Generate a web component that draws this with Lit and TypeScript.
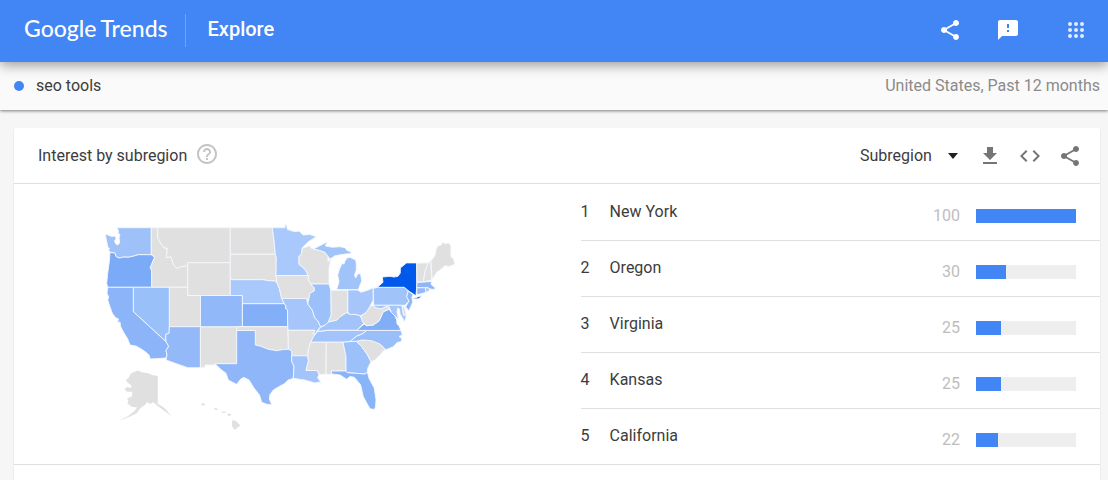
import { LitElement, html, css, svg } from "lit";
import { customElement, property } from "lit/decorators.js";

const NONE = "#e0e0e0";

interface Region {
  name: string;
  fill: string;
  d: string;
}

const REGIONS: Region[] = [
  { name: "Washington", fill: "#9fc1fa", d: "M117 227.7H151.3V254.7H138.3L134 256 128.3 257.3 124 257 119 258 116 256.5 115 253 110.3 252.3 108.5 250 109.5 248.5 108 247.5 107 243.3 106 238 105.3 234 111.7 236.5 115.5 236 116 239 114.5 241 115.5 243.5 117 245 119 244 119.7 241.7 119 238 120 234.5 118 233.5 118.5 231Z" },
  { name: "Oregon", fill: "#7baaf7", d: "M110 252.5 115 253 116 256.5 119 258 124 257 128.3 257.3 134 256 138.3 254.7H151.3L154.7 257.3 153 261 150.3 267.7 151.7 270.3V287.3H107.7L106.7 283.3 107.7 273.3 109.3 261.7Z" },
  { name: "Idaho", fill: NONE, d: "M151.3 227.7H157.7V237.7L160.7 243.3 164 247.7 167.3 248.3 166.3 257.7 171 256.7 173.3 264.3 177 268.3 181 266.5 187.7 265.7V287.3H151.7V270.3L150.3 267.7 153 261 154.7 257.3 151.3 254.7Z" },
  { name: "Montana", fill: NONE, d: "M157.7 227.7H230.3V262.7H187.7V265.7L181 266.5 177 268.3 173.3 264.3 171 256.7 166.3 257.7 167.3 248.3 164 247.7 160.7 243.3 157.7 237.7Z" },
  { name: "Wyoming", fill: NONE, d: "M187.7 262.7H230.3V295.5H187.7Z" },
  { name: "Utah", fill: NONE, d: "M169.3 287.3H187.7V295.5H200.5V326.7H169.3Z" },
  { name: "Nevada", fill: "#9ac0fa", d: "M133.3 287.3H169.3V333.3L165.7 334.3 166 341.7 133.3 311.7Z" },
  { name: "California", fill: "#8bb4f9", d: "M107.7 287.3H133.3V311.7L166 341.7 168.7 346.3 166 350.5 167 355 166 358 150.3 359 149 355 145 351.5 141.7 349.3 136 346 130 345 127.7 339 123.3 331.7 120.7 326.7 120 322 117.5 322.5 118.5 319 115.5 317.5 112.3 313.3 110 306.7 107.7 300 108.7 297 107 293.3Z" },
  { name: "Arizona", fill: "#93b9f9", d: "M169.3 326.7H200.4V367.7H187.7L166 360 167 355 166 350.5 168.7 346.3 166 341.7 165.7 334.3 169 333.3Z" },
  { name: "New Mexico", fill: NONE, d: "M200.4 326.7H236.7V363.7H215V365H205V367.7H200.4Z" },
  { name: "Colorado", fill: "#91b8f9", d: "M200.5 295.5H242.4V326.7H200.5Z" },
  { name: "North Dakota", fill: NONE, d: "M230.3 227.7H272.3L274 240 275.3 254.3H230.3Z" },
  { name: "South Dakota", fill: NONE, d: "M230.3 254.3H275.3L276.3 258 276 275.7 277 283 275 281 268.3 280.7 263.3 279.7H230.3Z" },
  { name: "Nebraska", fill: "#a9c8fb", d: "M230.3 279.7H263.3L268.3 280.7 275 281 277 283 279.3 288.3 281.7 298.5 284.3 303.7H242.4V295.5H230.3Z" },
  { name: "Kansas", fill: "#83aff8", d: "M242.4 303.7H284.3L286 306 285.5 308 287.5 310V326.7H242.4Z" },
  { name: "Minnesota", fill: "#a9c8fb", d: "M272.3 227.7H285V224.3L286.5 225 287.5 229.5 295 231.7 299 231 303.3 235 310 234.5 316.3 236.7 308.3 241.7 302.3 247.7 301.7 253.3 299 256.7V264.3L305 269.3 308.3 275.5H276L276.3 258 275.3 254.3 274 240Z" },
  { name: "Wisconsin", fill: NONE, d: "M302.3 248.3 306 247 310 245.5 311 248 313.3 249 320 250.5 325 252.3 328 256 328 261.7 331 258.3 329 268.3V284H310.7L308.3 280V275.5L305 269.3 299 264.3V256.7L301.7 253.3Z" },
  { name: "Iowa", fill: NONE, d: "M276 275.5H308.3V280L310.7 284 314.3 287.7V291L310 293.3 309 298.3 307 300 306 298.5H281.7L279.3 288.3 277 283Z" },
  { name: "Missouri", fill: "#a5c5fb", d: "M281.7 298.5H306L307 300 307.7 304 312.3 310 313.5 314 315 318.3 318 321 320.5 326.7 317 331 315.5 334H313L315 330.3H287.8L287.5 310 285.5 308 286 306 284.3 303.7Z" },
  { name: "Arkansas", fill: NONE, d: "M287.8 330.3H315L313 334H316L310.7 342 308.3 350 307.7 355.8H291.7V350.7L288.3 349.3Z" },
  { name: "Oklahoma", fill: NONE, d: "M236.7 326.7H287.7L288.3 349.3 283.3 350 276.7 350.7 268.3 349.3 260 346 255.3 345V330.5H236.7Z" },
  { name: "Texas", fill: "#8fb6f8", d: "M236.7 330.5H255.3V345L260 346 268.3 349.3 276.7 350.7 283.3 349.5 288.3 349.3 291.7 350.7V361L294 366.7 293.3 378.3 288.3 380 284 384 280 386 273.3 390 270 394.5 269.3 399 271.7 404.7 267 404.3 261.7 402.3 259.5 395 254 388 249 380 244 377.5 241 378.7 236.7 384.3 232 382 228.3 380 226 373.3 221 369.5 215 363.7H236.7Z" },
  { name: "Louisiana", fill: "#a2c4fb", d: "M291.7 355.8H307.7L308.5 361 306 370.5H317.3L319 375 317.5 377.5 321.7 383.3 319 382 315 383 310 381.5 305 380 301 379.5 293.3 378.3 294 366.7 291.7 361Z" },
  { name: "Mississippi", fill: NONE, d: "M310.7 342H326.3L326 374 320 374.7 317.3 370.5H306L308.5 361 307.7 355.8 308.3 350Z" },
  { name: "Alabama", fill: NONE, d: "M326.3 342H343L346 356.7V371H331L332 374 328.5 374.5 326 374Z" },
  { name: "Georgia", fill: "#9bc0fa", d: "M343 342 356.3 341.3 361.7 346.7 367 354 371 361.7 367.7 368.3 367.3 372.3 365 374 347.3 372.7 346 371V356.7Z" },
  { name: "Florida", fill: "#8ab4f8", d: "M331 371H346L347.3 372.7 365 374 367.5 372.3 369 378.3 374.3 388.3 376 400 375.5 407 374.3 409.5 370 408.7 366.5 402.5 363.3 396.7 362 391 360.7 385 354.3 377.3 350 376.5 346.7 379.3 340 375 332 374Z" },
  { name: "South Carolina", fill: NONE, d: "M356.3 341.3 362 340 371.7 340.7 380 344 385 349.3 380 355 375 360 371 361.7 367 354 361.7 346.7Z" },
  { name: "North Carolina", fill: "#99befa", d: "M366.7 330.4H401L402.3 335 399 336.5 402 338.5 401 341.7 397 342.5 393.3 346.7 386 349.7 380 344 371.7 340.7 362 340 356.3 341.3H350L356.7 336 362 334Z" },
  { name: "Tennessee", fill: "#a2c4fb", d: "M317.7 331.5 327.7 330.4H366.7L362 334 356.7 336 350 341.5 343 342H310.7L314 336Z" },
  { name: "Kentucky", fill: "#a2c4fb", d: "M317.7 331.5 320.5 327.3 325 325 328.3 322 336.7 320 341 316 346.7 312.5 350 314.5 355 314.3 360 315.5 364 323 360 327 356.7 330.2H327.7Z" },
  { name: "Virginia", fill: "#82aef7", d: "M356.7 330.4 364 324 366.7 325.7 373.3 325 379 321 383.3 311.7 389 309.3 391.5 312.5 395 316 396.7 320 397 324 399 326 401 330.4Z" },
  { name: "West Virginia", fill: NONE, d: "M370 306.3 374 305.3 375 307.5 381 309 386 306.5 389 306.7 389 309.3 383.3 311.7 379 321 373.3 325 366.7 325.7 362.5 322 361 316 366 312.5Z" },
  { name: "Ohio", fill: "#a5c5fb", d: "M347.7 290H357.7L361 292.3 368.3 290 373.2 287.7V300L370 306.3 366 312.5 361 315.7 355 314.3 350 314.5 347.7 311.7Z" },
  { name: "Indiana", fill: NONE, d: "M330.7 290.3H347.7V311.7L341 316 336.7 320 328.3 322 331 315Z" },
  { name: "Illinois", fill: "#9bc0fa", d: "M310.7 284H329L330.7 290.3 331 315 328.3 322 325 325 320.5 326.7 318 321 315 318.3 313.5 314 312.3 310 307.7 304 309 298.3 310 293.3 314.3 291V287.7Z" },
  { name: "Michigan", fill: "#a0c3fa", d: "M336.7 289.5H358.3L361.7 281 360.7 274.3 358 273.5 355.7 278 354.5 275 356.3 270V264L355.7 260 350 257.3 347 258 345 261 344 264 342 263.5 339.5 269 337.7 275 339 281.7ZM313.5 249 325 243 327 241.5 325.5 246 332.3 247.3 340 246.7 345 247.7 347 250.5 351 251.7 350.7 253.5 343.3 254.3 335 255.7 330 259 325 252.3 320 250.5Z" },
  { name: "Pennsylvania", fill: "#a0c3fa", d: "M373.2 288.5 377.7 287.3H404.3L408.3 291 406.7 296.7 409 301 405 305.3H373.7Z" },
  { name: "New York", fill: "#0059ea", d: "M377.3 287.3 383 282.3 382.3 277 390 276.3 394 277 398 276.3 400.3 273V268L406.5 262.9H416.7V287L416 295.7 409 291.3 404.3 287.3ZM412 299 421.7 295.5 419 298.8Z" },
  { name: "Vermont", fill: NONE, d: "M416.7 263.3 428.3 262.7 425 271.7 423.3 282H417Z" },
  { name: "New Hampshire", fill: NONE, d: "M428.3 262.7 430.7 260.7 431.7 280 423.3 282 425 271.7Z" },
  { name: "Maine", fill: NONE, d: "M430.9 261 435 255.5 436 250 438.3 245 440 246 443.3 242.3 445 244 448.3 243 450.7 245 451 256.7 453.5 259 455 264.3 448.3 266.7 445 265.5 442.3 268.3 436.7 272.3 432.3 279.5Z" },
  { name: "Massachusetts", fill: "#8fb6f8", d: "M417 282.5 431.7 281.5 431 284 432.7 286 435 287.5 434.5 289.5 430 289 428 287.7H416.7Z" },
  { name: "Connecticut", fill: "#93b9f9", d: "M416.7 287.8H425.7V292.5L417 294.7Z" },
  { name: "Rhode Island", fill: "#a2c4fb", d: "M425.7 287.8H428L430 290 425.7 292.5Z" },
  { name: "New Jersey", fill: "#8fb6f8", d: "M408.3 291 413 294.5 411.8 297.5 412.8 302 409 310.7 405.5 307 409 301 406.7 296.7Z" },
  { name: "Maryland", fill: "#a5c5fb", d: "M374 305.3H402L403.5 315 406.5 315.5 404.5 322 402.5 318 400 314 399.5 309 397.7 308 397 312 398.5 319 395 316 391.5 312.5 389 306.7 386 306.5 381 309 375 307.5Z" },
  { name: "Delaware", fill: NONE, d: "M402 305.5 404.5 307 406.5 315.2H403.5Z" },
  { name: "Alaska", fill: NONE, d: "M137.7 370.5 141.7 372.3 148.3 373.3 152 375 157.8 376V404L161.7 406 166 409.5 171.5 416.5 164 410.5 157 405.5 153.3 402.3 150 404 147 402 145.5 404.5 140 408.5 137 413 130 416.5 118 421.5 129 415.5 134.5 411 137 407.5 131.7 406.7 127.3 403.3 128.5 401 127 398.3 132 396.5 132.3 391.7 127 391.8 124.5 389.5 127 387 131 388 131.5 385.5 127 382 126 379.7 128.5 378 131 373.3Z" },
  { name: "Hawaii", fill: NONE, d: "M232.3 420 236 421 240.3 425.5 234.5 430 232 426ZM201 404 204 403 205 405 202 405.5ZM214 408.5 216.5 408 218 410 215 410ZM222 411.5H226L225.5 412.8H222ZM227 413.5 231 414 230 416.5 228 415.5Z" },
];

const PATHS = {
  share:
    "M18 16.08c-.76 0-1.44.3-1.96.77L8.91 12.7c.05-.23.09-.46.09-.7s-.04-.47-.09-.7l7.05-4.11c.54.5 1.25.81 2.04.81 1.66 0 3-1.34 3-3s-1.34-3-3-3-3 1.34-3 3c0 .24.04.47.09.7L8.04 9.81C7.5 9.31 6.79 9 6 9c-1.66 0-3 1.34-3 3s1.34 3 3 3c.79 0 1.5-.31 2.04-.81l7.12 4.16c-.05.21-.08.43-.08.65 0 1.61 1.31 2.92 2.92 2.92 1.61 0 2.92-1.31 2.92-2.92s-1.31-2.92-2.92-2.92z",
  feedback:
    "M20 2H4c-1.1 0-1.99.9-1.99 2L2 22l4-4h14c1.1 0 2-.9 2-2V4c0-1.100-.9-2-2-2zm-7 12h-2v-2h2v2zm0-4h-2V6h2v4z",
  apps:
    "M6 8a2 2 0 1 0 0-4 2 2 0 0 0 0 4zm6 0a2 2 0 1 0 0-4 2 2 0 0 0 0 4zm6 0a2 2 0 1 0 0-4 2 2 0 0 0 0 4zM6 14a2 2 0 1 0 0-4 2 2 0 0 0 0 4zm6 0a2 2 0 1 0 0-4 2 2 0 0 0 0 4zm6 0a2 2 0 1 0 0-4 2 2 0 0 0 0 4zM6 20a2 2 0 1 0 0-4 2 2 0 0 0 0 4zm6 0a2 2 0 1 0 0-4 2 2 0 0 0 0 4zm6 0a2 2 0 1 0 0-4 2 2 0 0 0 0 4z",
  help:
    "M11 18h2v-2h-2v2zm1-16C6.480 2 2 6.480 2 12s4.480 10 10 10 10-4.480 10-10S17.520 2 12 2zm0 18c-4.410 0-8-3.590-8-8s3.590-8 8-8 8 3.590 8 8-3.590 8-8 8zm0-14c-2.210 0-4 1.790-4 4h2c0-1.100.9-2 2-2s2 .9 2 2c0 2-3 1.750-3 5h2c0-2.250 3-2.500 3-5 0-2.210-1.790-4-4-4z",
  download: "M19 9h-4V3H9v6H5l7 7 7-7zM5 18v2h14v-2H5z",
  code: "M9.4 16.600 4.800 12l4.600-4.600L8 6l-6 6 6 6 1.400-1.400zm5.200 0 4.600-4.600-4.600-4.600L16 6l6 6-6 6-1.400-1.400z",
};

const icon = (d: string) =>
  html`<svg class="icon" viewBox="0 0 24 24" aria-hidden="true"><path d=${d}></path></svg>`;

@customElement("region-map")
export class RegionMap extends LitElement {
  static styles = css`
    :host {
      display: block;
    }
    .map {
      display: block;
      width: 100%;
      height: auto;
    }
    .state {
      stroke: #f4f7fd;
      stroke-width: 0.9;
      stroke-linejoin: round;
    }
    .state.remote {
      stroke: none;
    }
  `;

  render() {
    return html`<svg class="map" viewBox="100 220 360 216" role="img" aria-label="Interest by subregion">
      ${REGIONS.map(
        (r) =>
          svg`<path class=${r.name === "Alaska" || r.name === "Hawaii" ? "state remote" : "state"} fill=${r.fill} d=${r.d}></path>`
      )}
    </svg>`;
  }
}

@customElement("region-ranking")
export class RegionRanking extends LitElement {
  @property({ attribute: false }) rows: [string, number][] = [];

  static styles = css`
    .list {
      list-style: none;
      margin: 0;
      padding: 0;
    }
    .row {
      display: flex;
      align-items: center;
      box-sizing: border-box;
      height: 56px;
      padding-right: 24px;
      color: #3c3c3c;
    }
    .row + .row {
      padding-bottom: 1px;
      border-top: 1px solid #e0e0e0;
    }
    .rank {
      width: 29px;
    }
    .name {
      flex: 1;
    }
    .score {
      display: flex;
      align-items: center;
      gap: 16px;
      padding-top: 8px;
      color: #bdbdbd;
    }
    .track {
      width: 100px;
      height: 14px;
      background: #eee;
    }
    .fill {
      height: 100%;
      background: #4285f4;
    }
  `;

  render() {
    return html`<ol class="list">
      ${this.rows.map(
        ([name, value], i) => html`<li class="row">
          <span class="rank">${i + 1}</span>
          <span class="name">${name}</span>
          <span class="score">
            <span>${value}</span>
            <div class="track"><div class="fill" style="width:${value}%"></div></div>
          </span>
        </li>`
      )}
    </ol>`;
  }
}

@customElement("app-root")
export class AppRoot extends LitElement {
  static styles = css`
    :host {
      display: flex;
      flex-direction: column;
      min-height: 100vh;
      background: #f6f6f6;
      color: #3c3c3c;
      font: 400 16px/20px Roboto, sans-serif;
    }
    button,
    select {
      font: inherit;
      color: inherit;
      background: none;
      border: 0;
      padding: 0;
      margin: 0;
      cursor: pointer;
    }
    .icon {
      display: block;
      width: 24px;
      height: 24px;
      fill: currentColor;
    }
    .topbar {
      display: flex;
      align-items: center;
      box-sizing: border-box;
      height: 62px;
      padding: 0 20px 2px 24px;
      background: #4285f4;
      color: #fff;
      box-shadow: 0 3px 12px rgba(0, 0, 0, 0.4);
      z-index: 1;
    }
    .logo {
      display: flex;
      gap: 4px;
      padding-bottom: 4px;
      color: inherit;
      text-decoration: none;
      font: 500 23px/32px Lato, sans-serif;
    }
    .divider {
      width: 1px;
      height: 33px;
      margin: 0 22px 0 17px;
      background: rgba(255, 255, 255, 0.25);
    }
    .section {
      margin: 0;
      padding-bottom: 2px;
      flex: 1;
      font-size: 20px;
      line-height: 24px;
      font-weight: 500;
    }
    .actions {
      display: flex;
      align-items: center;
      gap: 34px;
    }
    .apps {
      margin-left: 10px;
      opacity: 0.85;
    }
    .query {
      display: flex;
      align-items: center;
      justify-content: space-between;
      box-sizing: border-box;
      height: 48px;
      padding: 0 8px 0 14px;
      background: #fafafa;
      box-shadow: 0 1px 3px rgba(0, 0, 0, 0.5);
    }
    .term {
      display: flex;
      align-items: center;
      gap: 12px;
    }
    .dot {
      width: 10px;
      height: 10px;
      border-radius: 50%;
      background: #4285f4;
    }
    .scope {
      color: #8a8a8a;
    }
    .card {
      flex: 1;
      margin: 18px 8px 0 14px;
      background: #fff;
      border-radius: 2px 2px 0 0;
      box-shadow: 0 1px 2px rgba(0, 0, 0, 0.12);
    }
    .head {
      display: flex;
      align-items: center;
      box-sizing: border-box;
      height: 56px;
      padding: 0 18px 0 24px;
      border-bottom: 1px solid #e0e0e0;
    }
    .title {
      margin: 0 8px 0 0;
      font-size: 16px;
      font-weight: 400;
    }
    .help {
      color: #c4c4c4;
      margin-right: auto;
      padding-bottom: 3px;
    }
    .picker {
      display: flex;
      align-items: center;
      margin-right: 20px;
    }
    .select {
      appearance: none;
      width: 98px;
      height: 24px;
    }
    .caret {
      width: 0;
      margin-left: -10px;
      border: 5px solid transparent;
      border-top: 6px solid #212121;
      border-bottom: 0;
      pointer-events: none;
    }
    .tools {
      display: flex;
      gap: 16px;
      color: #757575;
    }
    .content {
      display: grid;
      grid-template-columns: 12fr 11fr;
      border-bottom: 1px solid #e0e0e0;
    }
    .map {
      width: 360px;
      max-width: 100%;
      justify-self: center;
      padding: 36px 35px 0 0;
    }
  `;

  private rows: [string, number][] = [
    ["New York", 100],
    ["Oregon", 30],
    ["Virginia", 25],
    ["Kansas", 25],
    ["California", 22],
  ];

  render() {
    return html`
      <header class="topbar">
        <a class="logo" href="#"><span>Google</span><span>Trends</span></a>
        <div class="divider"></div>
        <h1 class="section">Explore</h1>
        <div class="actions">
          <button aria-label="Share">${icon(PATHS.share)}</button>
          <button aria-label="Send feedback">${icon(PATHS.feedback)}</button>
          <button class="apps" aria-label="Apps">${icon(PATHS.apps)}</button>
        </div>
      </header>
      <div class="query">
        <div class="term"><span class="dot"></span>seo tools</div>
        <div class="scope">United States, Past 12 months</div>
      </div>
      <main class="card">
        <div class="head">
          <h2 class="title">Interest by subregion</h2>
          <button class="help" aria-label="Help">${icon(PATHS.help)}</button>
          <div class="picker">
            <select class="select" aria-label="Resolution">
              <option>Subregion</option>
              <option>Metro</option>
              <option>City</option>
            </select>
            <span class="caret"></span>
          </div>
          <div class="tools">
            <button aria-label="Download">${icon(PATHS.download)}</button>
            <button aria-label="Embed">${icon(PATHS.code)}</button>
            <button aria-label="Share chart">${icon(PATHS.share)}</button>
          </div>
        </div>
        <div class="content">
          <region-map class="map"></region-map>
          <region-ranking .rows=${this.rows}></region-ranking>
        </div>
      </main>
    `;
  }
}
